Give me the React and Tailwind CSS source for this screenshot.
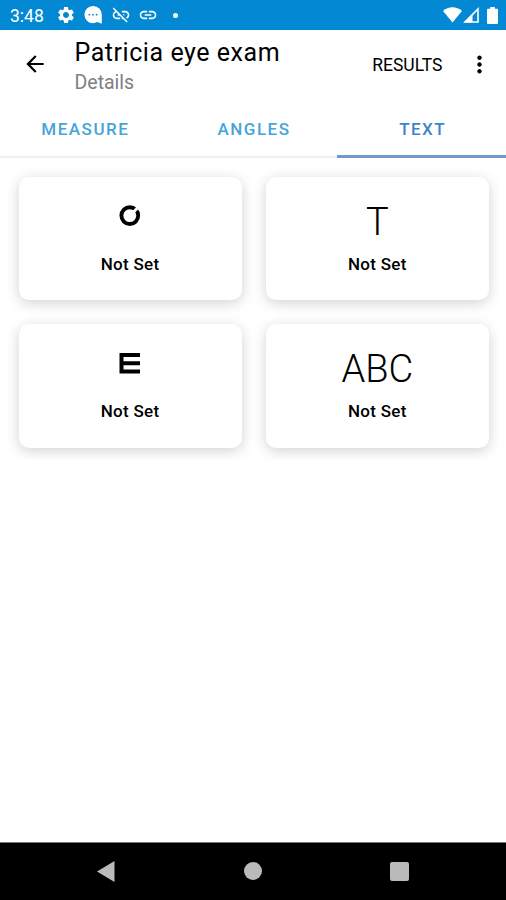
import React from 'react';
import { MdArrowBack, MdLink, MdLinkOff, MdMoreVert, MdSettings } from 'react-icons/md';

const StatusBar = () => (
  <div className="h-[30px] shrink-0 flex items-center justify-between bg-[#0388d3] text-white pl-[10px] pr-2">
    <div className="flex items-center">
      <span className="w-[46px] text-[17.5px] leading-[30px] pt-px">3:48</span>
      <MdSettings className="w-5 h-5" />
      <svg className="w-[18px] h-[18px] ml-2" viewBox="0 0 18 18">
        <path d="M9 0a8.600 8.600 0 1 0 0 17.200c1.600 0 3-.4 4.200-1.100L17.800 17.800V9A8.700 8.700 0 0 0 9 0Z" fill="currentColor" />
        <g fill="#0388d3">
          <circle cx="5.400" cy="8.700" r="0.900" />
          <circle cx="9" cy="8.700" r="0.900" />
          <circle cx="12.600" cy="8.700" r="0.900" />
        </g>
      </svg>
      <MdLinkOff className="w-5 h-5 ml-[9px]" />
      <MdLink className="w-5 h-5 ml-[7px]" />
      <span className="w-[5px] h-[5px] ml-[15px] rounded-full bg-white" />
    </div>
    <div className="flex items-center">
      <svg className="w-[19px] h-4" viewBox="0 0 19 16">
        <path d="M0 4C5.500-.9 13.500-.9 19 4L9.500 15.600Z" fill="currentColor" />
      </svg>
      <svg className="w-4 h-4 ml-px" viewBox="0 0 16 16">
        <path d="M15 2V15H2Z" fill="none" stroke="currentColor" strokeWidth="1.600" />
        <path d="M1 15.600 9.500 7V15.600Z" fill="currentColor" />
      </svg>
      <svg className="w-[11px] h-[17px] ml-2" viewBox="0 0 11 17">
        <path d="M3.200 0h4.600v1.800H10a1 1 0 0 1 1 1V16a1 1 0 0 1-1 1H1a1 1 0 0 1-1-1V2.800a1 1 0 0 1 1-1h2.200Z" fill="currentColor" />
      </svg>
    </div>
  </div>
);

const Header = () => (
  <header className="h-[70px] shrink-0 flex pl-[22px] pr-[13px]">
    <MdArrowBack className="w-[26px] h-[26px] mt-[21px]" />
    <div className="flex-1 pl-[26.5px] pt-2">
      <h1 className="text-[25px] leading-[29px] tracking-[0.55px]">Patricia eye exam</h1>
      <p className="pt-px text-[19.5px] leading-[30px] text-[#808080]">Details</p>
    </div>
    <button className="h-[70px] mr-[23.5px] text-[17.5px]">RESULTS</button>
    <MdMoreVert className="w-[27px] h-[27px] mt-[21px]" />
  </header>
);

const tabs = [
  { label: 'MEASURE', active: false },
  { label: 'ANGLES', active: false },
  { label: 'TEXT', active: true },
];

const Tabs = () => (
  <nav className="h-[58px] shrink-0 grid grid-cols-3 border-b-2 border-[#efefef]">
    {tabs.map((tab) => (
      <button
        key={tab.label}
        className={`h-[58px] pt-[5px] pl-[2px] text-[17px] font-medium tracking-[1.5px] border-b-[3px] ${
          tab.active ? 'text-[#3d85cb] border-[#7098cd]' : 'text-[#45a5da] border-transparent'
        }`}
      >
        {tab.label}
      </button>
    ))}
  </nav>
);

const RingIcon = () => (
  <svg className="w-[22px] h-[22px]" viewBox="0 0 22 22">
    <circle cx="10.800" cy="10.600" r="8.400" fill="none" stroke="black" strokeWidth="3.900" />
    <path d="M12 9.500 21 0.500" stroke="white" strokeWidth="3" />
  </svg>
);

const TumblingEIcon = () => (
  <svg className="w-[22px] h-[22px]" viewBox="0 0 22 22">
    <path d="M21 3H2.500V19.500H21M3 11.250H21" fill="none" stroke="black" strokeWidth="4" />
  </svg>
);

const cards = [
  { id: 'ring', icon: RingIcon },
  { id: 't', text: 'T' },
  { id: 'e', icon: TumblingEIcon },
  { id: 'abc', text: 'ABC' },
];

const App = () => {
  return (
    <div className="w-full h-screen flex flex-col bg-white text-black font-['Roboto',sans-serif]">
      <StatusBar />
      <Header />
      <Tabs />

      <main className="flex-1">
        <div className="grid grid-cols-2 gap-6 mr-[6px] pt-[18.5px] pb-3 pl-[18.5px] pr-[11px] overflow-hidden">
          {cards.map((card) => (
            <div
              key={card.id}
              className="h-[123.5px] flex flex-col items-center rounded-[10px] bg-white shadow-[0_3px_14px_rgba(0,0,0,0.18)]"
            >
              <div className="h-[74.4px] flex flex-col items-center">
                {card.icon ? (
                  <div className="pt-7">
                    <card.icon />
                  </div>
                ) : (
                  <span className="pt-[23.4px] text-[38px] leading-[44px] font-light">{card.text}</span>
                )}
              </div>
              <span className="text-[17px] leading-[26px] font-medium tracking-[0.3px]">Not Set</span>
            </div>
          ))}
        </div>
      </main>

      <footer className="h-[58px] shrink-0 flex items-center justify-between bg-black border-t border-[#777] pl-[97px] pr-[97px] pb-px text-[#bababa]">
        <svg className="w-[18px] h-[21px]" viewBox="0 0 18 21">
          <path d="M17.500 0V21L0 10.500Z" fill="currentColor" />
        </svg>
        <span className="w-[18px] h-[18px] rounded-full bg-[#bababa]" />
        <span className="w-[19px] h-[19px] rounded-[2px] bg-[#bababa]" />
      </footer>
    </div>
  );
};

export default App;
